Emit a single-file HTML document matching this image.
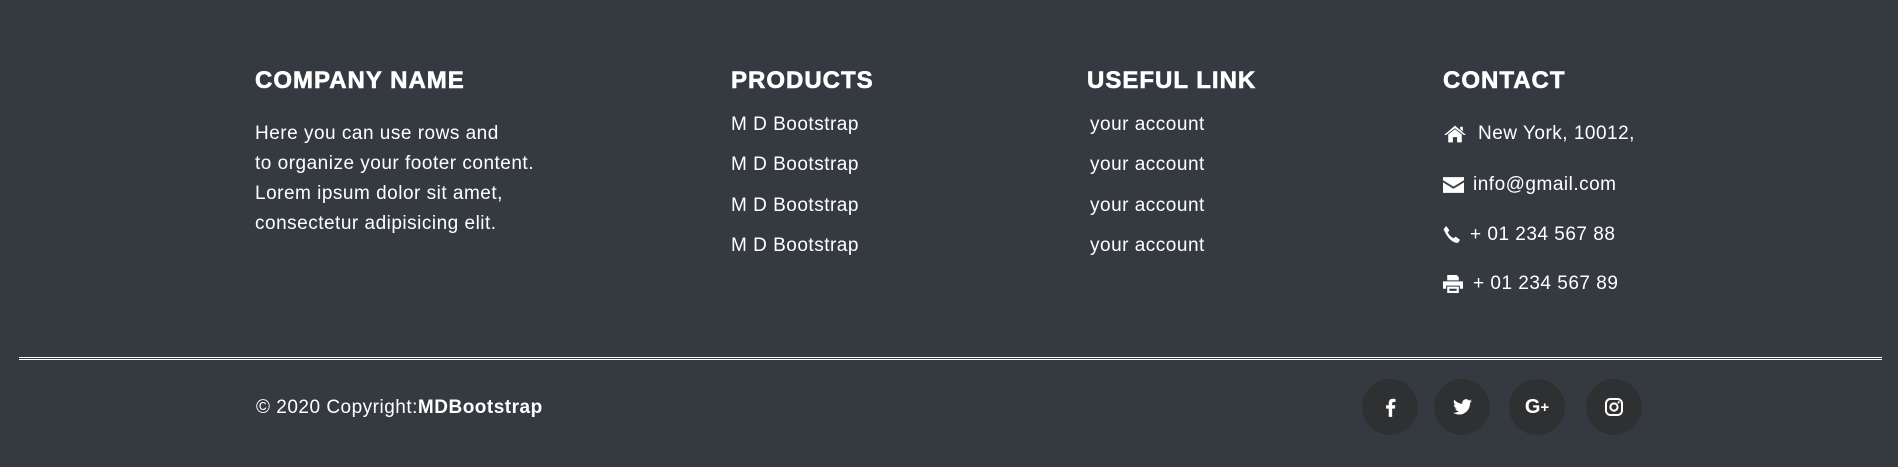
<!DOCTYPE html>
<html><head><meta charset="utf-8"><style>
html,body{margin:0;padding:0}
body{width:1898px;height:467px;background:#343a40;color:#fff;font-family:"Liberation Sans",sans-serif;position:relative;overflow:hidden}
.a{position:absolute;white-space:nowrap}
h5{position:absolute;margin:0;font-size:24px;font-weight:900;letter-spacing:1px;top:67px;-webkit-text-stroke:0.6px #fff}
.t{font-size:19px;line-height:30px;letter-spacing:0.5px}
.line{position:absolute;left:19px;width:1863px;top:357px;height:1px;border-top:1px solid #fff;border-bottom:1px solid #fff}
.c{position:absolute;width:56px;height:56px;border-radius:50%;background:#2f3032;top:379px;display:flex;align-items:center;justify-content:center}
.ic{display:inline-block;vertical-align:middle}
</style></head><body>
<h5 style="left:255px">COMPANY NAME</h5>
<div class="a t" style="left:255px;top:119px">Here you can use rows and<br>to organize your footer content.<br>Lorem ipsum dolor sit amet,<br>consectetur adipisicing elit.</div>

<h5 style="left:731px">PRODUCTS</h5>
<div class="a t" style="left:731px;top:110px">M D Bootstrap</div>
<div class="a t" style="left:731px;top:150px">M D Bootstrap</div>
<div class="a t" style="left:731px;top:191px">M D Bootstrap</div>
<div class="a t" style="left:731px;top:231px">M D Bootstrap</div>

<h5 style="left:1087px">USEFUL LINK</h5>
<div class="a t" style="left:1090px;top:110px">your account</div>
<div class="a t" style="left:1090px;top:150px">your account</div>
<div class="a t" style="left:1090px;top:191px">your account</div>
<div class="a t" style="left:1090px;top:231px">your account</div>

<h5 style="left:1443px">CONTACT</h5>
<div class="a t" style="left:1443px;top:119px"><svg class="ic" width="24" height="20" viewBox="0 0 23 18"><path d="M11.5 1 L1 10 L3 10 L11.5 3.5 L20 10 L22 10 Z M5 9.5 L5 17 L9.5 17 L9.5 12 L13.5 12 L13.5 17 L18 17 L18 9.5 L11.5 4.5 Z M16.5 2 L19 2 L19 6.5 L16.5 4.5Z" fill="#fff"/></svg><span style="margin-left:11px">New York, 10012,</span></div>
<div class="a t" style="left:1443px;top:170px"><svg class="ic" width="21" height="17" viewBox="0 0 20 16"><path d="M0 1 H20 V4 L10 10 L0 4Z M0 6 L10 12 L20 6 V16 H0Z" fill="#fff"/></svg><span style="margin-left:9px">info@gmail.com</span></div>
<div class="a t" style="left:1443px;top:220px"><svg class="ic" width="17" height="17" viewBox="0 0 16 16"><path d="M3 0 L6 4 L4.5 6 Q6.5 10 10 11.5 L12 10 L16 13 L14 16 Q6 15.5 0.5 3 Z" fill="#fff"/></svg><span style="margin-left:10px">+ 01 234 567 88</span></div>
<div class="a t" style="left:1443px;top:269px"><svg class="ic" width="20" height="18" viewBox="0 0 19 17"><path d="M4 0 H13 L15 2 V5 H4Z M0 6 H19 V13 H16 V10 H3 V13 H0Z M4 11 H15 V17 H4Z" fill="#fff"/><rect x="6" y="13" width="7" height="2" fill="#343a40"/></svg><span style="margin-left:10px">+ 01 234 567 89</span></div>

<div class="line"></div>
<div class="a t" style="left:256px;top:393px">© 2020 Copyright:<b>MDBootstrap</b></div>

<div class="c" style="left:1362px"><svg width="11" height="19" viewBox="0 0 10 17"><path d="M6.5 17 V9.5 H9 L9.4 6.5 H6.5 V4.7 Q6.5 3.5 8 3.5 H9.5 V0.8 Q8.5 0.6 7.2 0.6 Q3.4 0.6 3.4 4.4 V6.5 H1 V9.5 H3.4 V17Z" fill="#fff"/></svg></div>
<div class="c" style="left:1434px"><svg width="19" height="16" viewBox="0 0 24 20"><path d="M24 2.4a10 10 0 0 1-2.8.8A5 5 0 0 0 23.3.5a10 10 0 0 1-3.1 1.2A4.9 4.9 0 0 0 11.8 6 14 14 0 0 1 1.7.9a4.9 4.9 0 0 0 1.5 6.6A4.9 4.9 0 0 1 1 6.9a4.9 4.9 0 0 0 3.9 4.8 5 5 0 0 1-2.2.1 4.9 4.9 0 0 0 4.6 3.4A9.9 9.9 0 0 1 0 17.3 14 14 0 0 0 7.5 19.5c9 0 14-7.5 14-14v-.6A10 10 0 0 0 24 2.4z" fill="#fff"/></svg></div>
<div class="c" style="left:1509px"><span style="font-weight:bold;font-size:20px;line-height:20px">G<span style="font-size:15px;vertical-align:1px">+</span></span></div>
<div class="c" style="left:1586px"><svg width="18" height="18" viewBox="0 0 18 18"><rect x="1" y="1" width="16" height="16" rx="4.5" fill="none" stroke="#fff" stroke-width="2"/><circle cx="9" cy="9" r="3.6" fill="none" stroke="#fff" stroke-width="2"/><circle cx="13.6" cy="4.4" r="1.1" fill="#fff"/></svg></div>
</body></html>
